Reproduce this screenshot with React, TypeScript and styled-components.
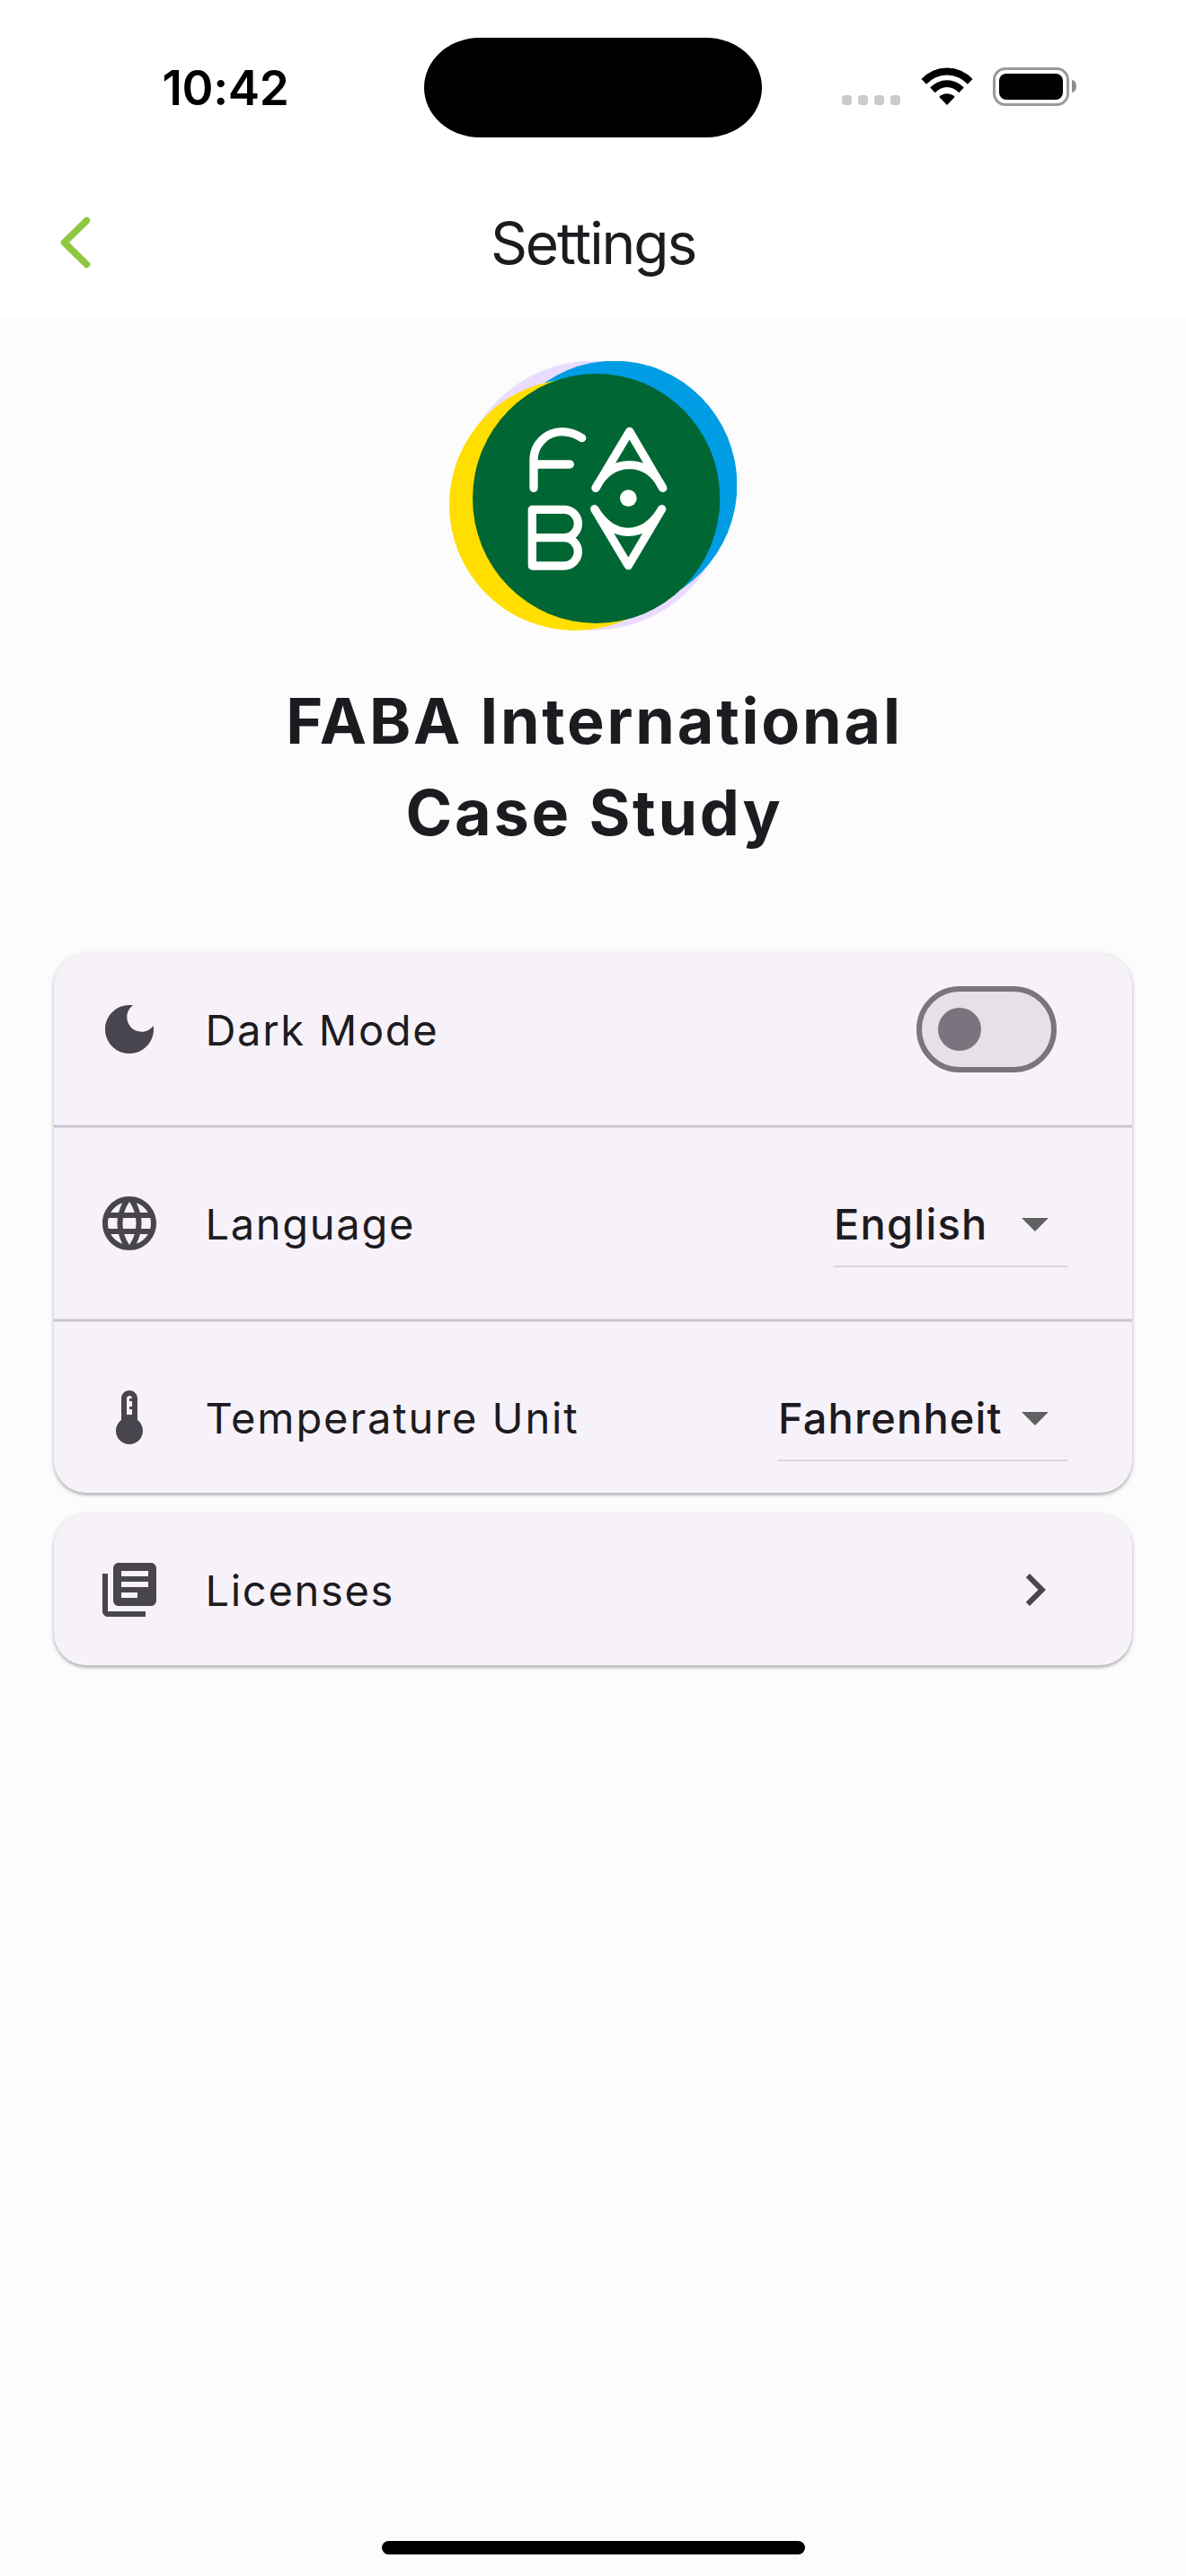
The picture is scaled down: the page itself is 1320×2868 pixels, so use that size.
import React from "react";
import styled, { createGlobalStyle } from "styled-components";

const GlobalStyle = createGlobalStyle`
  * { box-sizing: border-box; }
  html, body { margin: 0; padding: 0; background: #fcfcfc; }
  body { font-family: Inter, "Liberation Sans", sans-serif; color: #1d1b20; }
  h1, h2 { margin: 0; }
`;

const Screen = styled.div`
  width: 1320px;
  height: 2868px;
  display: flex;
  flex-direction: column;
  background: #fcfcfc;
  overflow: hidden;
`;

const Header = styled.header`
  height: 354px;
  flex: none;
  background: #fff;
  display: flex;
  flex-direction: column;
`;

const StatusBar = styled.div`
  height: 186px;
  display: grid;
  grid-template-columns: 472px 376px 472px;
  align-items: start;
`;

const Clock = styled.span`
  padding: 66px 0 0 180.5px;
  font-size: 53px;
  line-height: 64px;
  font-weight: 600;
  letter-spacing: -0.3px;
  color: #000;
`;

const Island = styled.div`
  margin-top: 41.5px;
  height: 111px;
  border-radius: 62px / 55.5px;
  background: #000;
`;

const StatusIcons = styled.div`
  padding: 75px 0 0 89px;
  display: flex;
  align-items: flex-start;
`;

const Signal = styled.div`
  display: flex;
  gap: 7px;
  padding-top: 31px;
  margin-right: 23px;
`;

const SignalDot = styled.i`
  width: 11px;
  height: 11px;
  border-radius: 3.5px;
  background: #cbcbcb;
`;

const WifiIcon = styled.svg`
  width: 58px;
  height: 42px;
  margin-right: 22px;
`;

const Battery = styled.div`
  width: 85px;
  height: 43px;
  padding: 4px;
  border: 3px solid #9a9a9a;
  border-radius: 14px;
`;

const BatteryLevel = styled.div`
  height: 29px;
  border-radius: 8px;
  background: #000;
`;

const BatteryCap = styled.div`
  width: 5px;
  height: 14px;
  margin: 14px 0 0 3px;
  border-radius: 0 5px 5px 0 / 0 7px 7px 0;
  background: #8e8e8e;
`;

const NavBar = styled.nav`
  height: 168px;
  display: grid;
  grid-template-columns: 168px 1fr 168px;
  align-items: center;
`;

const BackButton = styled.button`
  border: 0;
  padding: 0 0 0 67px;
  background: none;
  display: flex;
`;

const Title = styled.h1`
  padding-top: 2px;
  font-size: 64px;
  line-height: 80px;
  font-weight: 400;
  letter-spacing: -2.1px;
  text-align: center;
`;

const Hero = styled.section`
  padding-top: 48px;
  display: flex;
  flex-direction: column;
  align-items: center;
`;

const AppName = styled.h2`
  margin-top: 50px;
  padding-left: 3px;
  font-size: 70px;
  line-height: 102px;
  font-weight: 700;
  letter-spacing: 2.8px;
  text-align: center;
`;

const Cards = styled.main`
  padding: 106px 60px 0;
  display: flex;
  flex-direction: column;
  gap: 24px;
`;

const Card = styled.section`
  border-radius: 36px;
  background: #f7f2fa;
  box-shadow: 0 3px 3px rgba(0, 0, 0, 0.18), 0 1px 6px rgba(0, 0, 0, 0.16);
`;

const Row = styled.div`
  height: 168px;
  padding: 0 72px 0 48px;
  display: flex;
  align-items: center;
`;

const Label = styled.span<{ $spacing?: number }>`
  flex: 1;
  margin-left: 48.5px;
  padding-top: 2px;
  font-size: 47px;
  line-height: 72px;
  letter-spacing: ${(p) => p.$spacing ?? 1.7}px;
`;

const Divider = styled.hr`
  height: 4px;
  margin: 22px 0;
  border: solid #e1dbe6;
  border-width: 1px 0;
  background: #cac4d0;
`;

const Icon = styled.svg<{ $color?: string }>`
  width: 72px;
  height: 72px;
  flex: none;
  display: block;
  fill: ${(p) => p.$color ?? "#49454f"};
`;

const Switch = styled.button`
  width: 156px;
  height: 96px;
  margin-right: 12px;
  padding: 0 18px;
  border: 6px solid #79747e;
  border-radius: 48px;
  background: #e6e0e9;
  display: flex;
  align-items: center;
`;

const Thumb = styled.span`
  width: 48px;
  height: 48px;
  border-radius: 50%;
  background: #79747e;
`;

const Select = styled.div<{ $width: number }>`
  width: ${(p) => p.$width}px;
  height: 98px;
  padding-top: 2px;
  border-bottom: 2px solid #d9d6dc;
  display: flex;
  align-items: center;
  justify-content: space-between;
`;

const SelectValue = styled.span<{ $spacing: number }>`
  padding-top: 2px;
  font-size: 47px;
  line-height: 72px;
  font-weight: 500;
  letter-spacing: ${(p) => p.$spacing}px;
  white-space: nowrap;
`;

const HomeIndicator = styled.div`
  width: 471px;
  height: 15px;
  margin: auto auto 24px;
  border-radius: 8px;
  background: #000;
`;

const paths = {
  moon: "M12 3c-4.97 0-9 4.03-9 9s4.03 9 9 9 9-4.03 9-9c0-.46-.04-.92-.1-1.36-.98 1.37-2.58 2.26-4.4 2.26-2.98 0-5.4-2.42-5.4-5.4 0-1.81.89-3.42 2.26-4.4C12.92 3.04 12.46 3 12 3z",
  globe:
    "M11.99 2C6.47 2 2 6.48 2 12s4.47 10 9.99 10C17.52 22 22 17.52 22 12S17.52 2 11.99 2zm6.93 6h-2.95c-.32-1.25-.78-2.45-1.38-3.56 1.84.63 3.37 1.91 4.33 3.56zM12 4.04c.83 1.2 1.48 2.53 1.91 3.96h-3.82c.43-1.43 1.08-2.76 1.91-3.96zM4.26 14C4.1 13.36 4 12.69 4 12s.1-1.36.26-2h3.38c-.08.66-.14 1.32-.14 2 0 .68.06 1.34.14 2H4.26zm.82 2h2.95c.32 1.25.78 2.45 1.38 3.56-1.84-.63-3.37-1.9-4.33-3.56zm2.95-8H5.08c.96-1.66 2.49-2.93 4.33-3.56C8.81 5.55 8.35 6.75 8.03 8zM12 19.96c-.83-1.2-1.48-2.53-1.91-3.96h3.82c-.43 1.43-1.08 2.76-1.91 3.96zM14.34 14H9.66c-.09-.66-.16-1.32-.16-2 0-.68.07-1.35.16-2h4.68c.09.65.16 1.32.16 2 0 .68-.07 1.34-.16 2zm.25 5.56c.6-1.11 1.06-2.31 1.38-3.56h2.95c-.96 1.65-2.49 2.93-4.33 3.56zM16.36 14c.08-.66.14-1.32.14-2 0-.68-.06-1.34-.14-2h3.38c.16.64.26 1.31.26 2s-.1 1.36-.26 2h-3.38z",
  thermostat:
    "M15 13V5c0-1.66-1.34-3-3-3S9 3.34 9 5v8c-1.21.91-2 2.37-2 4 0 2.76 2.24 5 5 5s5-2.24 5-5c0-1.63-.79-3.09-2-4zm-4-8c0-.55.45-1 1-1s1 .45 1 1h-1v1h1v2h-1v1h1v2h-2V5z",
  library:
    "M4 6H2v14c0 1.1.9 2 2 2h14v-2H4V6zm16-4H8c-1.1 0-2 .9-2 2v12c0 1.1.9 2 2 2h12c1.1 0 2-.9 2-2V4c0-1.1-.9-2-2-2zm-1 5H9V5h10v2zm-4 8H9v-2h6v2zm4-4H9V9h10v2z",
  dropdown: "M7 10l5 5 5-5z",
  chevron: "M10 6L8.59 7.41 13.17 12l-4.58 4.59L10 18l6-6z",
};

const Glyph = ({ name, color }: { name: keyof typeof paths; color?: string }) => (
  <Icon viewBox="0 0 24 24" $color={color}>
    <path d={paths[name]} />
  </Icon>
);

const Logo = () => (
  <svg width="320" height="300" viewBox="60 66 960 900">
    <circle cx="540" cy="515" r="450" fill="#eadcff" />
    <ellipse cx="611" cy="480" rx="410" ry="415" fill="#009de4" />
    <circle cx="480" cy="546" r="420" fill="#ffde00" />
    <ellipse cx="551" cy="525" rx="413" ry="417" fill="#006633" />
    <g fill="none" stroke="#fff" strokeWidth="28" strokeLinecap="round" strokeLinejoin="round">
      <path d="M342 490V395C342 345 385 302 435 302C465 302 485 311 503 323M342 411H463" />
      <path d="M549 490L662 301L773 490Q735 413 662 413Q588 413 549 490" />
      <path d="M443 656H337M443 656a47 47 0 0 0 0-94H337V750H443a47 47 0 0 0 0-94" />
      <path d="M545 560L658 749L770 560Q726 637 658 637Q590 637 545 560" />
    </g>
    <circle cx="658" cy="524" r="28" fill="#fff" />
  </svg>
);

const Dropdown = ({ value, width, spacing }: { value: string; width: number; spacing: number }) => (
  <Select $width={width}>
    <SelectValue $spacing={spacing}>{value}</SelectValue>
    <Glyph name="dropdown" color="#616161" />
  </Select>
);

export default function App() {
  return (
    <Screen>
      <GlobalStyle />
      <Header>
        <StatusBar>
          <Clock>10:42</Clock>
          <Island />
          <StatusIcons>
            <Signal>
              <SignalDot />
              <SignalDot />
              <SignalDot />
              <SignalDot />
            </Signal>
            <WifiIcon viewBox="0 0 58 42">
              <path d="M0.500 13A38.700 38.700 0 0 1 57.500 13L52 18.700A31 31 0 0 0 6 18.700Z" />
              <path d="M10.200 22.500A25.500 25.500 0 0 1 47.800 22.500L42.300 28.200A17.500 17.500 0 0 0 15.700 28.200Z" />
              <path d="M20.300 33A12 12 0 0 1 37.700 33L29 42Z" />
            </WifiIcon>
            <Battery>
              <BatteryLevel />
            </Battery>
            <BatteryCap />
          </StatusIcons>
        </StatusBar>
        <NavBar>
          <BackButton aria-label="Back">
            <svg width="34" height="58" viewBox="0 0 34 58">
              <path d="M29.500 4.500L4.500 29L29.500 53.500" fill="none" stroke="#8dc83f" strokeWidth="7.500" strokeLinecap="round" strokeLinejoin="round" />
            </svg>
          </BackButton>
          <Title>Settings</Title>
        </NavBar>
      </Header>
      <Hero>
        <Logo />
        <AppName>
          FABA International
          <br />
          Case Study
        </AppName>
      </Hero>
      <Cards>
        <Card>
          <Row>
            <Glyph name="moon" />
            <Label>Dark Mode</Label>
            <Switch role="switch" aria-checked={false}>
              <Thumb />
            </Switch>
          </Row>
          <Divider />
          <Row>
            <Glyph name="globe" />
            <Label>Language</Label>
            <Dropdown value="English" width={260} spacing={1.2} />
          </Row>
          <Divider />
          <Row>
            <Glyph name="thermostat" />
            <Label $spacing={1.9}>Temperature Unit</Label>
            <Dropdown value="Fahrenheit" width={322} spacing={1.1} />
          </Row>
        </Card>
        <Card>
          <Row>
            <Glyph name="library" />
            <Label>Licenses</Label>
            <Glyph name="chevron" />
          </Row>
        </Card>
      </Cards>
      <HomeIndicator />
    </Screen>
  );
}
